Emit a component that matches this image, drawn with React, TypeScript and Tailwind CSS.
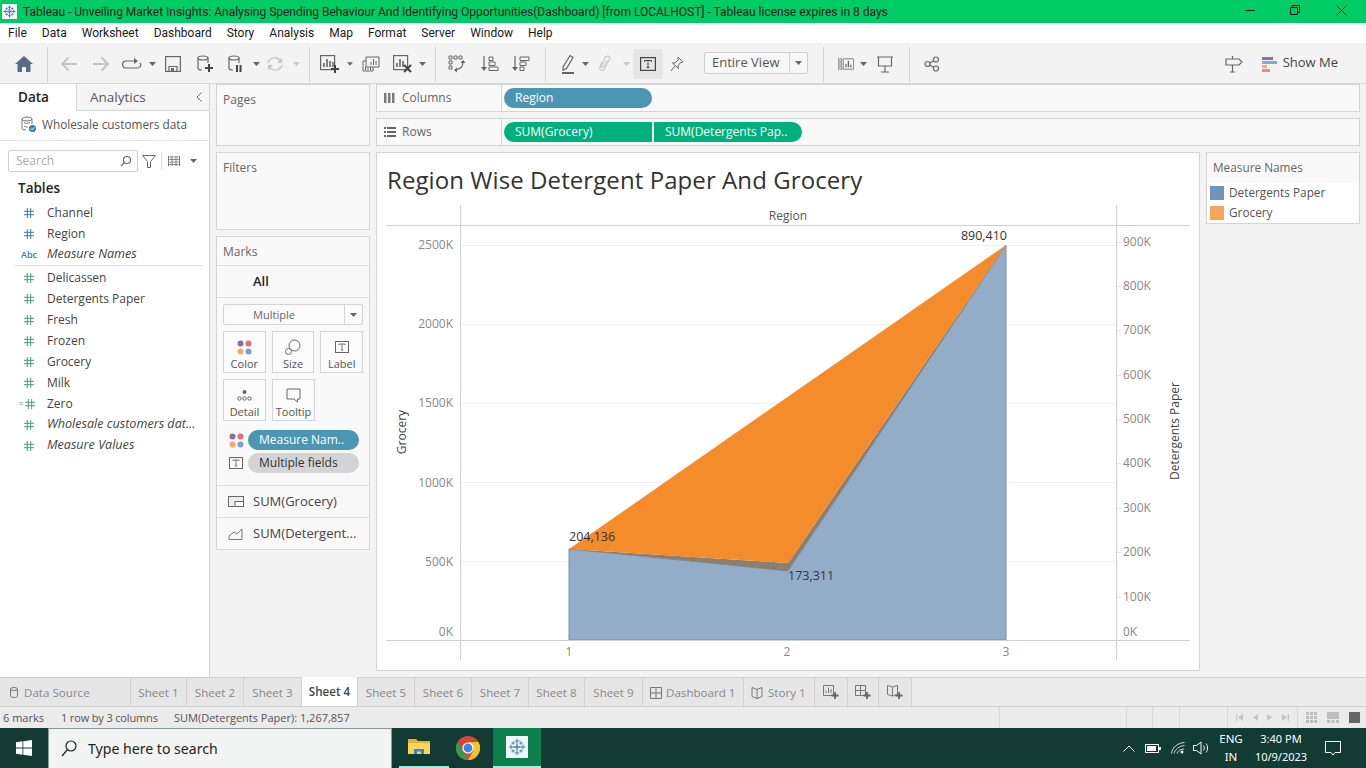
import type { ReactNode } from "react";

const ui = "font-['Open_Sans',sans-serif]";

// small toolbar glyphs, drawn by hand since no icon pack has the tableau ones
function Svg({ w = 20, h = 20, children }: { w?: number; h?: number; children: ReactNode }) {
  return (
    <svg width={w} height={h} viewBox={`0 0 ${w} ${h}`} fill="none" stroke="currentColor" strokeWidth="1.2">
      {children}
    </svg>
  );
}

function Caret({ light = false }: { light?: boolean }) {
  return (
    <svg width="7" height="4" viewBox="0 0 7 4">
      <path d="M0 0h7L3.5 4z" fill={light ? "#c8c8c8" : "#666"} />
    </svg>
  );
}

function Plus({ x, y }: { x: number; y: number }) {
  return <path d={`M${x} ${y - 4}v8M${x - 4} ${y}h8`} stroke="#444" strokeWidth="2" />;
}

function Hash({ color }: { color: string }) {
  return (
    <svg width="10" height="10" viewBox="0 0 10 10" stroke={color} strokeWidth="1">
      <path d="M3.3 0v10M6.7 0v10M0 3.3h10M0 6.7h10" />
    </svg>
  );
}

function TableauMark({ size = 14, color = "#3f86b4" }: { size?: number; color?: string }) {
  const c = size / 2;
  const cross = (x: number, y: number, r: number) => `M${x} ${y - r}v${r * 2}M${x - r} ${y}h${r * 2}`;
  return (
    <svg width={size} height={size} viewBox={`0 0 ${size} ${size}`} stroke={color} strokeWidth="1">
      <path d={cross(c, c, size * 0.2)} strokeWidth="1.4" />
      <path d={cross(c, size * 0.17, size * 0.13)} />
      <path d={cross(c, size * 0.83, size * 0.13)} />
      <path d={cross(size * 0.17, c, size * 0.13)} />
      <path d={cross(size * 0.83, c, size * 0.13)} />
      <path d={cross(size * 0.28, size * 0.28, size * 0.09)} />
      <path d={cross(size * 0.72, size * 0.28, size * 0.09)} />
      <path d={cross(size * 0.28, size * 0.72, size * 0.09)} />
      <path d={cross(size * 0.72, size * 0.72, size * 0.09)} />
    </svg>
  );
}

function Sep() {
  return <div className="w-px h-[35px] bg-[#d4d4d4]" />;
}

const tools: { w: string; node: ReactNode; cls?: string }[] = [
  {
    w: "w-[32px]",
    cls: "text-[#5b6b7d]",
    node: (
      <svg width="18" height="16" viewBox="0 0 18 16" fill="currentColor">
        <path d="M9 0L0 8h2.5v8h4.5v-5h4v5h4.5V8H18z" />
      </svg>
    ),
  },
  { w: "w-[15px]", node: <Sep /> },
  {
    w: "w-[28px]",
    cls: "text-[#c4c4c4]",
    node: (
      <Svg w={18} h={16}>
        <path d="M17 8H2M8.5 1.5L2 8l6.5 6.5" strokeWidth="1.8" />
      </Svg>
    ),
  },
  {
    w: "w-[36px]",
    cls: "text-[#c4c4c4]",
    node: (
      <Svg w={18} h={16}>
        <path d="M1 8h15M9.5 1.5L16 8l-6.5 6.5" strokeWidth="1.8" />
      </Svg>
    ),
  },
  {
    w: "w-[26px]",
    cls: "text-[#666]",
    node: (
      <Svg w={20} h={14}>
        <path d="M12 4H4a3 3 0 000 7h12a3 3 0 002-5" />
        <path d="M12 1l4 3-4 3z" fill="#666" stroke="none" />
      </Svg>
    ),
  },
  { w: "w-[14px]", node: <Caret /> },
  {
    w: "w-[28px]",
    cls: "text-[#666]",
    node: (
      <Svg w={16} h={16}>
        <rect x="0.6" y="0.6" width="14.8" height="14.8" />
        <path d="M4 15v-4.5h8V15" />
        <rect x="6" y="12" width="3" height="3" fill="#666" stroke="none" />
      </Svg>
    ),
  },
  {
    w: "w-[36px]",
    cls: "text-[#666]",
    node: (
      <Svg w={18} h={18}>
        <ellipse cx="7" cy="3" rx="5" ry="2" />
        <path d="M2 3v10c0 1.2 1.5 2 4 2M12 3v5" />
        <Plus x={13} y={13} />
      </Svg>
    ),
  },
  {
    w: "w-[26px]",
    cls: "text-[#666]",
    node: (
      <Svg w={18} h={18}>
        <ellipse cx="7" cy="3" rx="5" ry="2" />
        <path d="M2 3v10c0 1.2 1.5 2 4 2M12 3v5" />
        <path d="M10 10v7M13.5 10v7" stroke="#444" strokeWidth="2" />
      </Svg>
    ),
  },
  { w: "w-[14px]", node: <Caret /> },
  {
    w: "w-[24px]",
    cls: "text-[#c8c8c8]",
    node: (
      <Svg w={18} h={16}>
        <path d="M2 7a7 6.5 0 0112-3l2 2M16 9a7 6.5 0 01-12 3l-2-2" strokeWidth="1.5" />
        <path d="M16 1.5V7h-5zM2 14.5V9h5z" fill="#c8c8c8" stroke="none" />
      </Svg>
    ),
  },
  { w: "w-[18px]", node: <Caret light /> },
  { w: "w-[8px]", node: <Sep /> },
  {
    w: "w-[34px]",
    cls: "text-[#666]",
    node: (
      <Svg w={20} h={18}>
        <rect x="0.6" y="0.6" width="14" height="14" />
        <path d="M4 12V8M7 12V4M10 12V6M13 12V7" strokeWidth="1.6" />
        <Plus x={15} y={14} />
      </Svg>
    ),
  },
  { w: "w-[6px]", node: <Caret /> },
  {
    w: "w-[36px]",
    cls: "text-[#666]",
    node: (
      <Svg w={18} h={16}>
        <path d="M4 1h13v10H4zM1 5h3M1 5v10h10v-4" strokeWidth="1" />
        <path d="M9 9V6M11.5 9V3M14 9V5M3.5 14v-3M6 14v-2M8.5 14v-3" strokeWidth="1" />
      </Svg>
    ),
  },
  {
    w: "w-[28px]",
    cls: "text-[#666]",
    node: (
      <Svg w={20} h={18}>
        <rect x="0.6" y="0.6" width="14" height="14" />
        <path d="M4 12V8M7 12V4M10 12V6" strokeWidth="1.6" />
        <path d="M11 10l7 7M18 10l-7 7" stroke="#444" strokeWidth="2" />
      </Svg>
    ),
  },
  { w: "w-[10px]", node: <Caret /> },
  { w: "w-[16px]", node: <Sep /> },
  {
    w: "w-[28px]",
    cls: "text-[#666]",
    node: (
      <Svg w={18} h={18}>
        <path d="M1 1h3v3H1zM6 1h3v3H6zM11 1h3v3h-3zM1 6h3v3H1zM1 11h3v3H1z" strokeWidth="1" />
        <path d="M15 7c0 4-3 7-7 8" />
        <path d="M12.5 8L15 5l2.5 3zM9 12.5L6 15l3 2.5z" fill="#666" stroke="none" />
      </Svg>
    ),
  },
  {
    w: "w-[38px]",
    cls: "text-[#666]",
    node: (
      <Svg w={18} h={16}>
        <path d="M3 0v12" />
        <path d="M0 11h6l-3 4z" fill="#666" stroke="none" />
        <path d="M8 1h4v3.5H8zM8 6h6v3.5H8zM8 11h9v3.5H8z" strokeWidth="1" />
      </Svg>
    ),
  },
  {
    w: "w-[24px]",
    cls: "text-[#666]",
    node: (
      <Svg w={18} h={16}>
        <path d="M3 0v12" />
        <path d="M0 11h6l-3 4z" fill="#666" stroke="none" />
        <path d="M8 1h9v3.5H8zM8 6h6v3.5H8zM8 11h4v3.5H8z" strokeWidth="1" />
      </Svg>
    ),
  },
  { w: "w-[24px]", node: <Sep /> },
  {
    w: "w-[22px]",
    cls: "text-[#666]",
    node: (
      <Svg w={14} h={20}>
        <path d="M2 13L9 1.5l3 2L5.5 14.5 2 16z" />
        <path d="M1 19h12" strokeWidth="2" />
      </Svg>
    ),
  },
  { w: "w-[12px]", node: <Caret /> },
  {
    w: "w-[28px]",
    cls: "text-[#c8c8c8]",
    node: (
      <Svg w={14} h={18}>
        <path d="M4 7L2 12c-1 3 3 5 4.5 2l5-10c1-3-3-4-4.5-1.5L3.5 11c-.5 1.5 1.5 2 2 1L9 5" />
      </Svg>
    ),
  },
  { w: "w-[14px]", node: <Caret light /> },
  {
    w: "w-[30px]",
    cls: "bg-[#e6e6e6] h-[30px] text-[#444]",
    node: (
      <Svg w={16} h={14}>
        <rect x="0.6" y="0.6" width="14.8" height="12.8" />
        <path d="M4.5 5V3.5h7V5M8 3.5v7M6.5 10.5h3" strokeWidth="1" />
      </Svg>
    ),
  },
  {
    w: "w-[28px]",
    cls: "text-[#666]",
    node: (
      <Svg w={14} h={16}>
        <path d="M8 1l5 5-2.5.5L8 10l.5 2.5L2.5 7 5 7l3-3z" strokeWidth="1" />
        <path d="M5 10l-4 5" strokeWidth="1" />
      </Svg>
    ),
  },
];

const tools2: { w: string; node: ReactNode; cls?: string }[] = [
  { w: "w-[30px]", node: <Sep /> },
  {
    w: "w-[16px]",
    cls: "text-[#666]",
    node: (
      <Svg w={20} h={14}>
        <path d="M.5.5h4v3h-4zM.5 5.5h4v3h-4zM.5 10.5h4v3h-4zM6.5.5h13v13h-13z" strokeWidth="1" />
        <path d="M10 11V7M13 11V3M16 11V8" strokeWidth="1.6" />
      </Svg>
    ),
  },
  { w: "w-[18px]", node: <Caret /> },
  {
    w: "w-[26px]",
    cls: "text-[#666]",
    node: (
      <Svg w={18} h={17}>
        <path d="M1 1h16M2.5 1v9h13V1M9 10v6M5 16h8" />
      </Svg>
    ),
  },
  { w: "w-[22px]", node: <Sep /> },
  {
    w: "w-[24px]",
    cls: "text-[#666]",
    node: (
      <Svg w={16} h={16}>
        <circle cx="3.5" cy="8" r="2.5" />
        <circle cx="12" cy="3.5" r="2.5" />
        <circle cx="12" cy="12.5" r="2.5" />
        <path d="M5.8 7l4-2.3M5.8 9l4 2.3" />
      </Svg>
    ),
  },
];

function Toolbar() {
  return (
    <div className="h-[41px] flex items-center pl-2 pt-[2px] bg-[#f3f3f3] border-b border-[#d8d8d8]">
      {tools.map((t, i) => (
        <div key={i} className={`${t.w} ${t.cls ?? ""} shrink-0 flex items-center justify-center`}>
          {t.node}
        </div>
      ))}
      <div className="ml-[13px] -mt-[2px] w-[104px] h-[22px] flex items-center border border-[#cfcfcf] rounded-[2px] bg-[#f7f7f7] text-[13px] text-[#555]">
        <span className="flex-1 pl-[7px]">Entire View</span>
        <span className="w-[18px] h-full border-l border-[#cfcfcf] flex items-center justify-center">
          <Caret />
        </span>
      </div>
      {tools2.map((t, i) => (
        <div key={i} className={`${t.w} ${t.cls ?? ""} shrink-0 flex items-center justify-center`}>
          {t.node}
        </div>
      ))}
      <div className="flex-1" />
      <div className="text-[#666] mr-[19px] flex">
        <Svg w={18} h={18}>
          <path d="M1 4h13l3 3-3 3H1zM7.5 1v3M7.5 10v7M5 17h5" />
        </Svg>
      </div>
      <svg width="15" height="17" viewBox="0 0 15 17" className="mr-[6px]">
        <rect y="1" width="11" height="3" fill="#8a729e" />
        <rect y="5" width="15" height="3" fill="#86a6cf" />
        <rect y="9" width="5" height="3" fill="#f4ab71" />
        <rect y="13" width="8" height="3" fill="#f77f85" />
      </svg>
      <span className="text-[13px] -mt-[2px] text-[#444] mr-[28px]">Show Me</span>
    </div>
  );
}

const fields: { name: string; dim?: boolean; italic?: boolean; abc?: boolean; calc?: boolean; line?: boolean }[] = [
  { name: "Channel", dim: true },
  { name: "Region", dim: true },
  { name: "Measure Names", abc: true, italic: true, line: true },
  { name: "Delicassen" },
  { name: "Detergents Paper" },
  { name: "Fresh" },
  { name: "Frozen" },
  { name: "Grocery" },
  { name: "Milk" },
  { name: "Zero", calc: true },
  { name: "Wholesale customers dat...", italic: true },
  { name: "Measure Values", italic: true },
];

function DataPane() {
  return (
    <aside className="w-[210px] shrink-0 bg-white border-r border-[#d4d4d4] flex flex-col">
      <div className="h-[27px] flex text-[13.5px]">
        <div className="w-[77px] border-r border-[#d4d4d4] pl-[18px] pt-[3px] font-semibold text-[#222]">Data</div>
        <div className="flex-1 border-b border-[#d4d4d4] bg-[#f5f5f5] pl-[13px] pt-[3px] text-[#555] flex justify-between pr-[7px]">
          <span>Analytics</span>
          <svg width="6" height="10" viewBox="0 0 6 10" fill="none" stroke="#666" className="mt-[5px]">
            <path d="M5.5.5L1 5l4.5 4.5" />
          </svg>
        </div>
      </div>
      <div className="h-[30px] flex items-center pl-[20px] pb-[2px] border-b border-[#e4e4e4] text-[11.8px] text-[#555]">
        <svg width="17" height="17" viewBox="0 0 17 17" fill="none" stroke="#777" className="mr-[5px]">
          <ellipse cx="7" cy="3" rx="5" ry="2" />
          <path d="M2 3v9c0 1 1 2 4 2M12 3v5M4 6.5c1 1 5 1 6 0M4 10c1 .8 2 1 4 1" />
          <circle cx="12.5" cy="12.5" r="3.5" fill="#3b7ea1" stroke="none" />
          <path d="M10.8 12.5l1.3 1.3 2-2.3" stroke="#fff" />
        </svg>
        Wholesale customers data
      </div>
      <div className="flex items-center h-[22px] mt-[9px] ml-[8px]">
        <div className="w-[130px] h-[22px] border border-[#cfcfcf] rounded-[2px] flex items-center pl-[7px] pr-[5px] text-[12px] text-[#aaa] justify-between">
          Search
          <svg width="12" height="12" viewBox="0 0 12 12" fill="none" stroke="#666" strokeWidth="1.2">
            <circle cx="7" cy="5" r="3.5" />
            <path d="M4.5 7.5L1 11" />
          </svg>
        </div>
        <svg width="14" height="13" viewBox="0 0 14 13" fill="none" stroke="#666" className="ml-[4px]">
          <path d="M.5.5h13L8.5 6.5v6h-3v-6z" />
        </svg>
        <div className="w-px h-[18px] bg-[#ddd] ml-[5px]" />
        <svg width="12" height="10" viewBox="0 0 12 10" stroke="#666" className="ml-[6px]">
          <path d="M0 1h12M0 3.5h12M0 6h12M0 8.5h12M.5 0v10M4 0v10M8 0v10M11.5 0v10" strokeWidth="1" strokeDasharray="1.5 .6" />
        </svg>
        <span className="ml-[10px] flex">
          <Caret />
        </span>
      </div>
      <div className="pl-[18px] mt-[6px] h-[22px] text-[13.5px] font-semibold text-[#222]">Tables</div>
      <div className="pl-[15px] pr-[6px] pt-[2px] text-[12px] text-[#444]">
        {fields.map((f) => (
          <div key={f.name} className={f.line ? "border-b border-[#dedede] h-[22px] mb-[1px]" : "h-[21px]"}>
            <div className="h-[21px] flex items-center">
              <span className="w-[32px] shrink-0 flex items-center justify-center pr-[4px]">
                {f.abc ? (
                  <span className="text-[9px] font-semibold text-[#3f7a99]">Abc</span>
                ) : (
                  <span className="flex items-center">
                    {f.calc && <span className="text-[9px] leading-none text-[#3f9e78] mr-px -ml-[5px]">=</span>}
                    <Hash color={f.dim ? "#3f7a99" : "#3f9e78"} />
                  </span>
                )}
              </span>
              <span className={f.italic ? "italic text-[12.6px] whitespace-nowrap" : "whitespace-nowrap"}>{f.name}</span>
            </div>
          </div>
        ))}
      </div>
    </aside>
  );
}

function Card({ title, cls }: { title: string; cls: string }) {
  return (
    <div className={`${cls} bg-[#f9f9f9] border border-[#d4d4d4] px-[6px] pt-[6px] text-[12px] text-[#666]`}>{title}</div>
  );
}

function MarkBtn({ label, children }: { label: string; children: ReactNode }) {
  return (
    <div className="w-[43px] h-[42px] border border-[#d4d4d4] bg-[#fbfbfb] flex flex-col items-center pt-[5px] text-[11px] text-[#555]">
      <div className="h-[20px] flex items-center justify-center">{children}</div>
      <span className="leading-[14px]">{label}</span>
    </div>
  );
}

function Dots({ size = 15 }: { size?: number }) {
  return (
    <svg width={size} height={size} viewBox="0 0 15 15">
      <circle cx="3.5" cy="3.5" r="3" fill="#8a6e9e" />
      <circle cx="11.5" cy="3.5" r="3" fill="#ee6a72" />
      <circle cx="3.5" cy="11.5" r="3" fill="#f4a870" />
      <circle cx="11.5" cy="11.5" r="3" fill="#7f9fcb" />
    </svg>
  );
}

function TBox() {
  return (
    <svg width="14" height="12" viewBox="0 0 14 12" fill="none" stroke="#666">
      <rect x=".5" y=".5" width="13" height="11" />
      <path d="M4 4V3h6v1M7 3v6M5.8 9h2.4" strokeWidth=".9" />
    </svg>
  );
}

function MarksCard() {
  return (
    <div className="h-[314px] bg-[#f9f9f9] border border-[#d4d4d4] text-[#444] flex flex-col">
      <div className="h-[29px] border-b border-[#dedede] px-[6px] pt-[6px] text-[12px] text-[#666]">Marks</div>
      <div className="h-[32px] border-b border-[#dedede] pl-[36px] pt-[6px] text-[13px] font-semibold text-[#222]">All</div>
      <div className="mx-[6px] mt-[6px] h-[21px] border border-[#d4d4d4] rounded-[2px] bg-[#fbfbfb] flex text-[11px] text-[#666]">
        <span className="flex-1 text-center pt-[2px] pr-[20px]">Multiple</span>
        <span className="w-[18px] border-l border-[#d4d4d4] flex items-center justify-center">
          <Caret />
        </span>
      </div>
      <div className="mx-[6px] mt-[6px] flex gap-[6px]">
        <MarkBtn label="Color">
          <Dots />
        </MarkBtn>
        <MarkBtn label="Size">
          <svg width="16" height="16" viewBox="0 0 16 16" fill="none" stroke="#666">
            <circle cx="9.5" cy="6.5" r="5.5" />
            <circle cx="3.5" cy="12.5" r="3" fill="#fbfbfb" />
          </svg>
        </MarkBtn>
        <MarkBtn label="Label">
          <TBox />
        </MarkBtn>
      </div>
      <div className="mx-[6px] mt-[6px] flex gap-[6px]">
        <MarkBtn label="Detail">
          <svg width="15" height="12" viewBox="0 0 15 12" fill="none" stroke="#666">
            <circle cx="7.5" cy="3" r="2" fill="#666" stroke="none" />
            <circle cx="2.5" cy="9.5" r="1.7" />
            <circle cx="7.5" cy="9.5" r="1.7" />
            <circle cx="12.5" cy="9.5" r="1.7" />
          </svg>
        </MarkBtn>
        <MarkBtn label="Tooltip">
          <svg width="15" height="15" viewBox="0 0 15 15" fill="none" stroke="#666">
            <path d="M1 1h13v10h-2.5v3L8 11H1z" />
          </svg>
        </MarkBtn>
      </div>
      <div className="pl-[12px] pr-[10px] mt-[9px] flex items-center h-[20px]">
        <span className="w-[19px] flex">
          <Dots />
        </span>
        <div className="flex-1 h-[20px] rounded-full bg-[#4b96b3] text-white text-[12px] font-medium pl-[11px] leading-[19px] whitespace-nowrap">
          Measure Nam..
        </div>
      </div>
      <div className="pl-[12px] pr-[10px] mt-[3px] flex items-center h-[20px]">
        <span className="w-[19px] flex">
          <TBox />
        </span>
        <div className="flex-1 h-[20px] rounded-full bg-[#d4d4d4] text-[#333] text-[12px] font-medium pl-[11px] leading-[19px]">
          Multiple fields
        </div>
      </div>
      <div className="mt-[12px] h-[32px] border-t border-[#dedede] flex items-center pl-[11px] text-[13px]">
        <svg width="17" height="12" viewBox="0 0 17 12" fill="none" stroke="#666" className="mr-[8px]">
          <rect x=".5" y=".5" width="15" height="10" fill="#eee" />
          <rect x="7" y="5.5" width="8.5" height="5" fill="#fff" />
        </svg>
        SUM(Grocery)
      </div>
      <div className="h-[32px] border-t border-[#dedede] flex items-center pl-[11px] text-[13px] whitespace-nowrap">
        <svg width="17" height="12" viewBox="0 0 17 12" fill="none" stroke="#777" className="mr-[8px]">
          <path d="M1 11.5V8l5-4 3 2 5-5v10.5z" />
        </svg>
        SUM(Detergent...
      </div>
    </div>
  );
}

function Shelf({ icon, label, children }: { icon: ReactNode; label: string; children: ReactNode }) {
  return (
    <div className="h-[28px] border border-[#d4d4d4] bg-[#f9f9f9] flex">
      <div className="w-[125px] border-r border-[#d4d4d4] flex items-center pl-[7px] text-[12px] text-[#666]">
        <span className="w-[18px] flex">{icon}</span>
        {label}
      </div>
      <div className="pl-[2px] flex items-center text-white text-[12px]">{children}</div>
    </div>
  );
}

const leftTicks = [
  ["2500K", 249],
  ["2000K", 328],
  ["1500K", 407],
  ["1000K", 487],
  ["500K", 566],
  ["0K", 636],
] as const;

const rightTicks = [
  ["900K", 246, 242],
  ["800K", 290, 286],
  ["700K", 334, 330],
  ["600K", 379, 375],
  ["500K", 423, 419],
  ["400K", 467, 463],
  ["300K", 512, 508],
  ["200K", 556, 552],
  ["100K", 601, 597],
  ["0K", 636, 640],
] as const;

function Chart() {
  const font = "'Open Sans', sans-serif";
  return (
    <div className="w-[824px] h-[519px] shrink-0 bg-white border border-[#d4d4d4] flex flex-col">
      <div className="h-[42px] pl-[10px] pt-[9px] text-[24px] tracking-[0.08px] leading-[36px] text-[#333] whitespace-nowrap">
        Region Wise Detergent Paper And Grocery
      </div>
      {/* viewBox uses page coordinates so the numbers line up with the picture */}
      <svg className="mt-[10px]" width="822" height="465" viewBox="377 205 822 465" fontFamily={font} fontSize="12">
        {[245, 324, 403, 482, 561].map((y) => (
          <line key={y} x1="461" x2="1116" y1={y + 0.5} y2={y + 0.5} stroke="#f0f0f0" />
        ))}
        <polygon points="569,640 569,549 788,571 1006,245 1006,640" fill="#93adc9" stroke="#6f90b8" />
        <polygon points="569,549 788,563 1006,245 788,571" fill="#8d7f70" />
        <polygon points="569,549 788,563 1006,245" fill="#f48c2b" />
        <line x1="386" x2="1190" y1="225.5" y2="225.5" stroke="#cfcfcf" />
        <line x1="386" x2="1190" y1="640.5" y2="640.5" stroke="#cfcfcf" />
        <line x1="460.5" x2="460.5" y1="205" y2="660" stroke="#cfcfcf" />
        <line x1="1116.5" x2="1116.5" y1="205" y2="660" stroke="#cfcfcf" />
        {rightTicks.slice(0, 9).map(([, , t]) => (
          <line key={t} x1="1117" x2="1121" y1={t + 0.5} y2={t + 0.5} stroke="#e8e8e8" />
        ))}
        <text x="788" y="220" textAnchor="middle" fill="#555">Region</text>
        {leftTicks.map(([t, y]) => (
          <text key={t} x="453" y={y} textAnchor="end" fill="#888">{t}</text>
        ))}
        {rightTicks.map(([t, y]) => (
          <text key={t} x="1123" y={y} fill="#888">{t}</text>
        ))}
        <text x="569" y="656" textAnchor="middle" fill="#888">1</text>
        <text x="787" y="656" textAnchor="middle" fill="#888">2</text>
        <text x="1006" y="656" textAnchor="middle" fill="#888">3</text>
        <text transform="translate(406 432) rotate(-90)" textAnchor="middle" fill="#444">Grocery</text>
        <text transform="translate(1179 431) rotate(-90)" textAnchor="middle" fill="#444">Detergents Paper</text>
        <text x="569" y="541" fill="#333" fontSize="12.5">204,136</text>
        <text x="788" y="580" fill="#333" fontSize="12.5">173,311</text>
        <text x="1007" y="240" textAnchor="end" fill="#333" fontSize="12.5">890,410</text>
      </svg>
    </div>
  );
}

function Legend() {
  return (
    <div className="w-[154px] h-[72px] bg-white border border-[#d4d4d4] text-[11.8px] text-[#555]">
      <div className="h-[30px] bg-[#f9f9f9] pl-[6px] pt-[6px] text-[#666]">Measure Names</div>
      <div className="h-[20px] flex items-center pl-[3px]">
        <span className="w-[14px] h-[14px] bg-[#7193b8] mr-[5px]" />
        Detergents Paper
      </div>
      <div className="h-[20px] flex items-center pl-[3px]">
        <span className="w-[14px] h-[14px] bg-[#f4a55a] mr-[5px]" />
        Grocery
      </div>
    </div>
  );
}

const tabs: { label: string; w: string; active?: boolean }[] = [
  { label: "Sheet 1", w: "w-[56px]" },
  { label: "Sheet 2", w: "w-[57px]" },
  { label: "Sheet 3", w: "w-[58px]" },
  { label: "Sheet 4", w: "w-[56px]", active: true },
  { label: "Sheet 5", w: "w-[57px]" },
  { label: "Sheet 6", w: "w-[57px]" },
  { label: "Sheet 7", w: "w-[57px]" },
  { label: "Sheet 8", w: "w-[56px]" },
  { label: "Sheet 9", w: "w-[58px]" },
];

function Tabs() {
  return (
    <div className="h-[30px] flex bg-[#ebebeb] border-t border-[#d0d0d0] border-b text-[11.6px] text-[#888]">
      <div className="w-[131px] shrink-0 flex items-center pl-[10px] pt-px border-r border-[#d0d0d0] bg-[#e6e6e6]">
        <svg width="8" height="11" viewBox="0 0 8 11" fill="none" stroke="#777" className="mr-[6px]">
          <ellipse cx="4" cy="2" rx="3.5" ry="1.5" />
          <path d="M.5 2v7c0 .8 1.5 1.5 3.5 1.5S7.5 9.800 7.5 9V2" />
        </svg>
        Data Source
      </div>
      {tabs.map((t) => (
        <div
          key={t.label}
          className={`${t.w} shrink-0 flex items-center justify-center border-r border-[#d0d0d0] ${
            t.active ? "bg-white text-[#444] font-semibold -mt-px" : "bg-[#e6e6e6] pt-px"
          }`}
        >
          {t.label}
        </div>
      ))}
      <div className="w-[101px] shrink-0 flex items-center pl-[7px] pt-px border-r border-[#d0d0d0] bg-[#e6e6e6]">
        <svg width="12" height="12" viewBox="0 0 12 12" fill="none" stroke="#777" className="mr-[4px]">
          <path d="M.5.5h11v11H.5zM.5 6h11M6 .5v11" />
        </svg>
        Dashboard 1
      </div>
      <div className="w-[71px] shrink-0 flex items-center pl-[7px] pt-px border-r border-[#d0d0d0] bg-[#e6e6e6]">
        <svg width="12" height="12" viewBox="0 0 12 12" fill="none" stroke="#777" className="mr-[5px]">
          <path d="M6 2.5L1 .5v9l5 2 5-2v-9zM6 2.5v9" />
        </svg>
        Story 1
      </div>
      <div className="w-[33px] shrink-0 flex items-center justify-center border-r border-[#d0d0d0] bg-[#e6e6e6] text-[#777]">
        <Svg w={16} h={15}>
          <path d="M.5.5h10v10H.5z" strokeWidth="1" />
          <path d="M3 8V5.5M5.5 8V2.5M8 8V4" strokeWidth="1" />
          <path d="M12 7v7M8.5 10.5h7" stroke="#666" strokeWidth="1.8" />
        </Svg>
      </div>
      <div className="w-[31px] shrink-0 flex items-center justify-center border-r border-[#d0d0d0] bg-[#e6e6e6] text-[#777]">
        <Svg w={16} h={15}>
          <path d="M.5.5h10v10H.5zM.5 5.5h10M5.5.5v10" strokeWidth="1" />
          <path d="M12 7v7M8.5 10.5h7" stroke="#666" strokeWidth="1.8" />
        </Svg>
      </div>
      <div className="w-[33px] shrink-0 flex items-center justify-center border-r border-[#d0d0d0] bg-[#e6e6e6] text-[#777]">
        <Svg w={16} h={15}>
          <path d="M5.5 2L.5.5v9l5 1.5 5-1.5v-9zM5.5 2v9" strokeWidth="1" />
          <path d="M12 7v7M8.5 10.5h7" stroke="#666" strokeWidth="1.8" />
        </Svg>
      </div>
    </div>
  );
}

function StatusBar() {
  const nav = "#c4c4c4";
  return (
    <div className="h-[21px] bg-[#ebebeb] flex items-center text-[11px] text-[#555]">
      <span className="ml-[3px] w-[58px] pt-px">6 marks</span>
      <span className="w-[113px] pt-px tracking-[-0.15px]">1 row by 3 columns</span>
      <span className="pt-px">SUM(Detergents Paper): 1,267,857</span>
      <div className="flex-1" />
      <div className="w-[128px] h-full border-l border-r border-[#d8d8d8]" />
      <div className="w-[26px] h-full border-r border-[#d8d8d8]" />
      <div className="w-[27px] h-full border-r border-[#d8d8d8]" />
      <div className="w-[48px] h-full border-r border-[#d8d8d8]" />
      <div className="w-[70px] h-full border-r border-[#d8d8d8] flex items-center justify-around px-[3px]">
        <svg width="7" height="7" viewBox="0 0 7 7" fill={nav}>
          <path d="M0 0h1.2v7H0zM7 0v7L2 3.5z" />
        </svg>
        <svg width="5" height="7" viewBox="0 0 5 7" fill={nav}>
          <path d="M5 0v7L0 3.5z" />
        </svg>
        <svg width="5" height="7" viewBox="0 0 5 7" fill={nav}>
          <path d="M0 0v7l5-3.5z" />
        </svg>
        <svg width="7" height="7" viewBox="0 0 7 7" fill={nav}>
          <path d="M5.8 0H7v7H5.8zM0 0v7l5-3.5z" />
        </svg>
      </div>
      <div className="w-[68px] h-full flex items-center gap-[10px] pl-[8px]">
        <svg width="11" height="11" viewBox="0 0 11 11" fill="#bdbdbd">
          <path d="M0 0h3v3H0zM4 0h3v3H4zM8 0h3v3H8zM0 4h3v3H0zM4 4h3v3H4zM8 4h3v3H8zM0 8h3v3H0zM4 8h3v3H4zM8 8h3v3H8z" />
        </svg>
        <svg width="12" height="11" viewBox="0 0 12 11" fill="#bdbdbd">
          <path d="M0 0h12v7H0zM0 8h3v3H0zM4.5 8h3v3h-3zM9 8h3v3H9z" />
        </svg>
        <span className="w-[11px] h-[11px] bg-[#666]" />
      </div>
    </div>
  );
}

function Taskbar() {
  return (
    <div className="h-[40px] bg-[#113b33] flex items-center text-white font-['Noto_Sans',sans-serif]">
      <div className="w-[48px] flex justify-center">
        <svg width="16" height="16" viewBox="0 0 16 16" fill="#fff">
          <path d="M0 2.2l6.5-.9v6.300H0zM7.300 1.200L16 0v7.600H7.300zM0 8.400h6.500v6.300L0 13.800zM7.300 8.400H16V16l-8.700-1.200z" />
        </svg>
      </div>
      <div className="w-[344px] h-[40px] bg-[#f2f4f3] border border-[#8a9a96] border-b-0 flex items-center pl-[12px] text-[14.1px] text-[#222]">
        <svg width="16" height="17" viewBox="0 0 16 17" fill="none" stroke="#222" strokeWidth="1.2" className="mr-[11px]">
          <circle cx="10" cy="6" r="5" />
          <path d="M6.5 9.5L1 16" />
        </svg>
        Type here to search
      </div>
      <div className="w-[7px]" />
      <div className="w-[50px] h-full flex items-center justify-center pr-[11px] border-b-2 border-[#a5ecd4]">
        <svg width="22" height="18" viewBox="0 0 22 18">
          <path d="M0 1h8l2 2h12v13H0z" fill="#e8b12f" />
          <path d="M0 5h22v11H0z" fill="#f9d45e" />
          <path d="M6 11h10v5h-3v-2.5H9V16H6z" fill="#3a86c8" />
        </svg>
      </div>
      <div className="w-[44px] h-full flex items-center justify-center pr-[6px]">
        <svg width="24" height="24" viewBox="0 0 24 24">
          <circle cx="12" cy="12" r="12" fill="#d9443a" />
          <path d="M12 24a12 12 0 01-10.4-18L7 15.5z" fill="#2f9e4f" />
          <path d="M12 24l5.5-9.5L12 6h10.4A12 12 0 0112 24z" fill="#f6c32c" />
          <circle cx="12" cy="12" r="5.6" fill="#fff" />
          <circle cx="12" cy="12" r="4.4" fill="#3e84e8" />
        </svg>
      </div>
      <div className="w-[48px] h-full flex items-center justify-center bg-[#0b7f4d] border-b-2 border-[#a5ecd4]">
        <div className="w-[22px] h-[22px] bg-[#f2f5f6] flex items-center justify-center">
          <TableauMark size={18} />
        </div>
      </div>
      <div className="flex-1" />
      <svg width="12" height="7" viewBox="0 0 12 7" fill="none" stroke="#fff" className="mr-[10px]">
        <path d="M.5 6.5L6 1l5.5 5.5" />
      </svg>
      <svg width="16" height="9" viewBox="0 0 16 9" className="mr-[10px]">
        <rect x=".5" y=".5" width="13" height="8" fill="none" stroke="#fff" />
        <rect x="2" y="2" width="9" height="5" fill="#fff" />
        <rect x="14" y="3" width="2" height="3" fill="#fff" />
      </svg>
      <svg width="14" height="12" viewBox="0 0 14 12" fill="none" stroke="#ddd" className="mr-[8px]">
        <path d="M.5 11.5C1 6 6 1 13.5.5M3 11.5C3.5 8 8 4 13.5 3.5M6 11.5C6.5 9.5 9 7 13 7" />
        <circle cx="11" cy="10" r="1.5" fill="#fff" stroke="none" />
      </svg>
      <svg width="17" height="14" viewBox="0 0 17 14" fill="none" stroke="#fff" className="mr-[9px]">
        <path d="M.5 4.5h3L8 1v12L3.5 9.5h-3zM10.500 4.500c1 1.500 1 3.500 0 5M13 2.500c2 2.500 2 6.500 0 9" />
      </svg>
      <div className="w-[24px] -mt-px text-[11.5px] leading-[18px] text-center mr-[7px]">
        <div>ENG</div>
        <div>IN</div>
      </div>
      <div className="w-[62px] -mt-px text-[11px] leading-[18px] text-center mr-[13px]">
        <div>3:40 PM</div>
        <div>10/9/2023</div>
      </div>
      <svg width="16" height="15" viewBox="0 0 16 15" fill="none" stroke="#fff" className="mr-[25px]">
        <path d="M.5.5h15v11H10l-2 2.5-2-2.5H.5z" />
      </svg>
    </div>
  );
}

export default function App() {
  return (
    <div className={`${ui} w-[1366px] h-[768px] overflow-hidden flex flex-col bg-[#f3f3f3]`}>
      <div className="h-[23px] bg-[#00cc66] flex items-center text-[12px] tracking-[-0.012px] text-[#1a1a1a] font-['Roboto',sans-serif]">
        <div className="w-[15px] h-[15px] ml-[2px] mr-[6px] bg-white flex items-center justify-center">
          <TableauMark size={13} />
        </div>
        <span className="flex-1 whitespace-nowrap">
          Tableau - Unveiling Market Insights: Analysing Spending Behaviour And Identifying Opportunities(Dashboard) [from LOCALHOST] - Tableau license expires in 8 days
        </span>
        <svg width="10" height="1" viewBox="0 0 10 1" className="mr-[35px] mb-[3px]">
          <path d="M0 .5h10" stroke="#111" />
        </svg>
        <svg width="10" height="10" viewBox="0 0 10 10" fill="none" stroke="#111" className="mr-[36px] mb-[3px]">
          <path d="M.5 2.5h7v7h-7zM2.5 2.5v-2h7v7h-2" />
        </svg>
        <svg width="11" height="11" viewBox="0 0 11 11" stroke="#111" className="mr-[19px] mb-[3px]">
          <path d="M.5.5l10 10M10.5.5l-10 10" />
        </svg>
      </div>
      <div className="h-[20px] bg-white flex items-center text-[12px] text-[#1a1a1a] font-['Roboto',sans-serif] pl-[8px] gap-[15px] whitespace-nowrap">
        {["File", "Data", "Worksheet", "Dashboard", "Story", "Analysis", "Map", "Format", "Server", "Window", "Help"].map((m) => (
          <span key={m}>{m}</span>
        ))}
      </div>
      <Toolbar />
      <div className="flex-1 min-h-0 flex">
        <DataPane />
        <div className="w-[154px] ml-[6px] shrink-0 flex flex-col gap-[6px]">
          <Card title="Pages" cls="h-[62px]" />
          <Card title="Filters" cls="h-[78px]" />
          <MarksCard />
        </div>
        <div className="w-[984px] ml-[6px] shrink-0 flex flex-col gap-[6px]">
          <Shelf
            label="Columns"
            icon={
              <svg width="11" height="10" viewBox="0 0 11 10" fill="#666">
                <path d="M0 0h2.5v10H0zM4 0h2.5v10H4zM8 0h2.5v10H8z" opacity=".85" />
              </svg>
            }
          >
            <div className="w-[148px] h-[20px] rounded-full bg-[#4b96b3] pl-[11px] font-medium leading-[19px]">Region</div>
          </Shelf>
          <Shelf
            label="Rows"
            icon={
              <svg width="12" height="10" viewBox="0 0 12 10" fill="#666">
                <path d="M0 0h2v2H0zM3 0h9v2H3zM0 4h2v2H0zM3 4h9v2H3zM0 8h2v2H0zM3 8h9v2H3z" />
              </svg>
            }
          >
            <div className="w-[148px] h-[20px] rounded-l-full bg-[#00b07c] pl-[11px] font-medium leading-[19px]">SUM(Grocery)</div>
            <div className="w-[148px] h-[20px] ml-[2px] rounded-r-full bg-[#00b07c] pl-[11px] font-medium leading-[19px] whitespace-nowrap">
              SUM(Detergents Pap..
            </div>
          </Shelf>
          <div className="flex gap-[6px]">
            <Chart />
            <Legend />
          </div>
        </div>
      </div>
      <Tabs />
      <StatusBar />
      <Taskbar />
    </div>
  );
}
